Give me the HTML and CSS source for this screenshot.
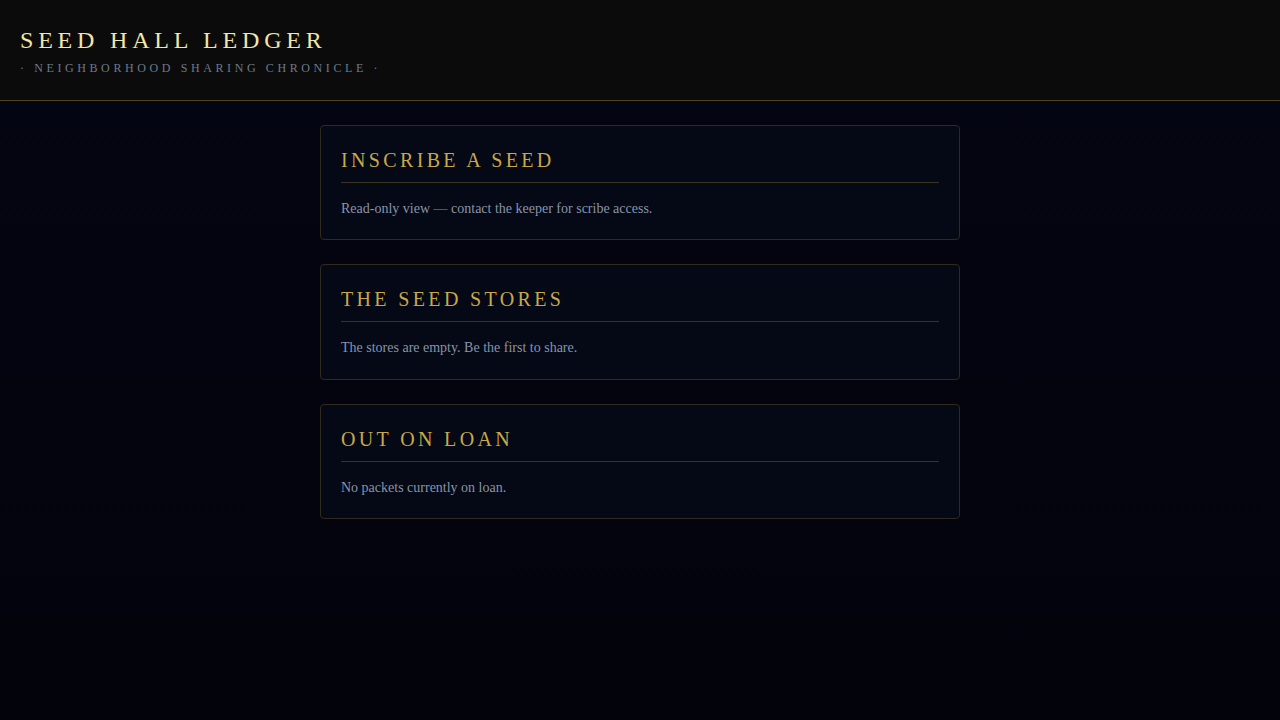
FILE: index.html
```html
<!DOCTYPE html>
<html lang="en">
<head>
<meta charset="utf-8">
<title>Seed Hall Ledger</title>
<link rel="stylesheet" href="styles.css">
</head>
<body>
<header class="masthead">
  <h1 class="title">SEED HALL LEDGER</h1>
  <div class="subtitle">· NEIGHBORHOOD SHARING CHRONICLE ·</div>
</header>
<main class="ledger">
  <section class="card">
    <h2 class="card-title">INSCRIBE A SEED</h2>
    <p class="card-text">Read-only view — contact the keeper for scribe access.</p>
  </section>
  <section class="card">
    <h2 class="card-title">THE SEED STORES</h2>
    <p class="card-text">The stores are empty. Be the first to share.</p>
  </section>
  <section class="card">
    <h2 class="card-title">OUT ON LOAN</h2>
    <p class="card-text">No packets currently on loan.</p>
  </section>
</main>
</body>
</html>
```
FILE: styles.css
```css
html, body {
  margin: 0;
  padding: 0;
}
body {
  min-height: 100vh;
  background: linear-gradient(180deg, #040512 0%, #03030c 100%);
  font-family: "Liberation Serif", "Times New Roman", serif;
}
.masthead {
  background: #0b0b0b;
  border-bottom: 1px solid #4d4220;
  padding: 26px 20px 28px;
  height: 46px;
}
.title {
  margin: 0 0 6px;
  font-size: 24px;
  line-height: 1.2;
  font-weight: normal;
  letter-spacing: 0.2em;
  color: #f2e6a8;
}
.subtitle {
  font-size: 12px;
  letter-spacing: 0.3em;
  color: #6d7a8c;
}
.ledger {
  width: 640px;
  margin: 0 auto;
  padding-top: 24px;
  display: flex;
  flex-direction: column;
  gap: 24px;
}
.card {
  background: #040915;
  border: 1px solid #2f2a1b;
  border-radius: 4px;
  padding: 20px 20px 19px;
}
.card-title {
  margin: 0 0 15px;
  padding-bottom: 8px;
  border-bottom: 1px solid #3b3320;
  font-size: 20px;
  line-height: 1.4;
  font-weight: normal;
  letter-spacing: 3.35px;
  color: #c9a84c;
}
.card-text {
  margin: 0;
  font-size: 14px;
  line-height: 1.6;
  color: #8a93a8;
}
```
